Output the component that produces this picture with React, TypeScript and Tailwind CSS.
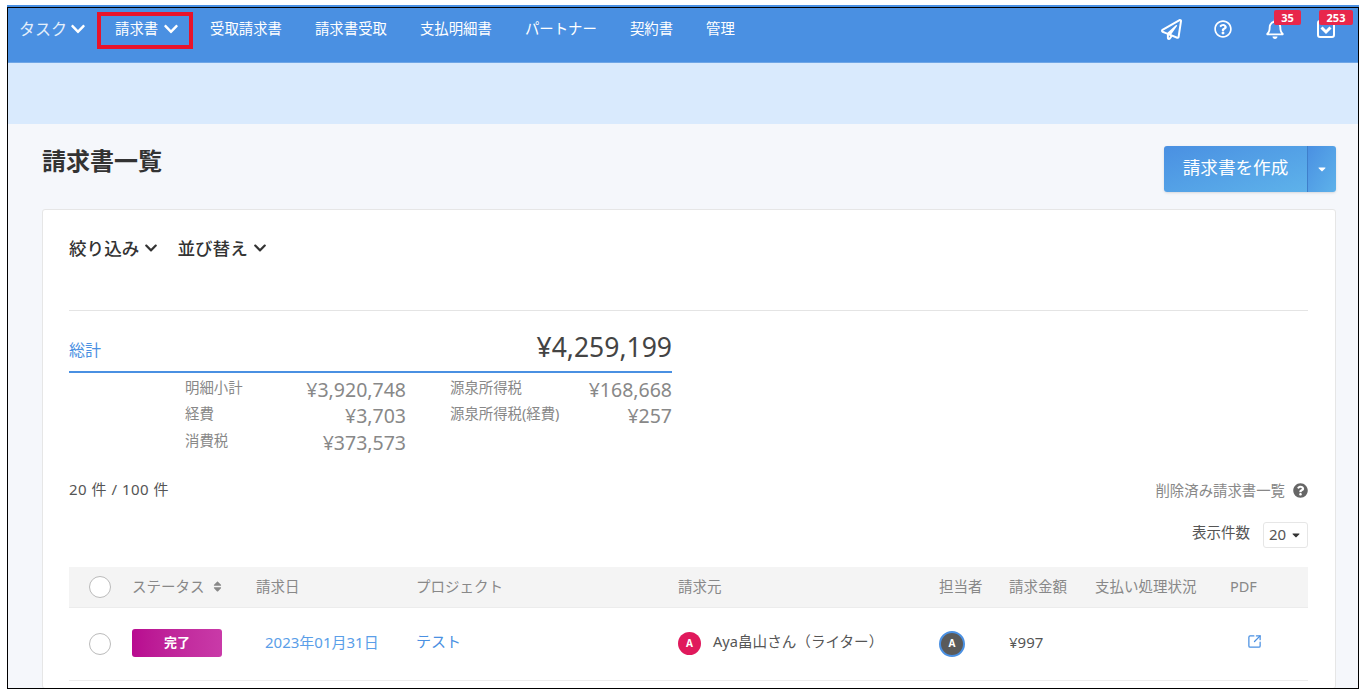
import React from "react";
import { FaChevronDown, FaRegPaperPlane, FaRegQuestionCircle, FaRegBell, FaCaretDown, FaSort, FaQuestionCircle } from "react-icons/fa";
import { SquareArrowOutUpRight } from "lucide-react";

const font = { fontFamily: '"Noto Sans", "Noto Sans CJK JP", sans-serif' };
const navItems = ["受取請求書", "請求書受取", "支払明細書", "パートナー", "契約書", "管理"];

const App: React.FC = () => {
  return (
    <div className="w-[1368px] h-[699px] bg-white overflow-hidden pt-[5px] pl-[7px]" style={font}>
      <div className="w-[1352px] h-[2px] bg-[#4a90e2]" />
      <div className="w-[1352px] h-[682px] border border-black bg-[#f5f7fb] overflow-hidden">
        <header className="h-[55px] bg-[#4a90e2] border-b border-[#6fa6e6] flex text-white text-[14.4px] relative">
          <div className="flex items-center h-[42px] pl-[11px] gap-[3px] w-[86px] text-[16px] text-[#e4effb]">
            <span>タスク</span>
            <FaChevronDown className="text-[16px] text-white" />
          </div>
          <div className="relative flex items-center h-[42px] ml-[3px] w-[96px] pl-[18px] gap-[5px]">
            <span>請求書</span>
            <FaChevronDown className="text-[16px]" />
            <div className="absolute left-0 top-[4px] w-[96px] h-[37px] border-4 border-[#e8132b]" />
          </div>
          <div className="flex items-center h-[42px] ml-[17px] gap-[33px]">
            {navItems.map((t) => (
              <span key={t}>{t}</span>
            ))}
          </div>
          <div className="ml-auto flex items-center h-[42px] pr-[23px] relative">
            <FaRegPaperPlane className="text-[21px] mr-[32px]" />
            <FaRegQuestionCircle className="text-[18px] mr-[33px]" />
            <div className="relative mr-[32px]">
              <FaRegBell className="text-[20px]" />
              <span className="absolute left-[9px] top-[-9px] w-[27px] h-[15px] rounded-[2px] bg-[#e8274b] text-[11px] font-bold leading-[15px] text-center">35</span>
            </div>
            <div className="relative">
              <svg width="18" height="18" viewBox="0 0 18 18" fill="none">
                <rect x="1" y="1" width="16" height="16" rx="2" stroke="white" strokeWidth="2" />
                <path d="M4.5 7.5 9 12l4.5-4.5" stroke="white" strokeWidth="3" />
              </svg>
              <span className="absolute left-[2px] top-[-10px] w-[34px] h-[15px] rounded-[2px] bg-[#e8274b] text-[11px] font-bold leading-[15px] text-center">253</span>
            </div>
          </div>
        </header>
        <div className="h-[61px] bg-[#d9eafd]" />
        <main className="pl-[34px] pr-[22px]">
          <div className="flex justify-between h-[85px]">
            <h1 className="text-[24px] font-bold text-[#333] mt-[19px] leading-[34px]" style={{ fontFamily: '"Noto Sans CJK JP", sans-serif' }}>請求書一覧</h1>
            <div className="flex h-[46px] mt-[22px] rounded-[3px] shadow-sm text-white overflow-hidden">
              <div className="w-[143px] bg-gradient-to-br from-[#4a90e2] to-[#5eb2ea] flex items-center justify-center text-[17.6px] pb-[3px]">請求書を作成</div>
              <div className="w-[29px] border-l border-[#3f7fcb] bg-gradient-to-br from-[#4a90e2] to-[#5eb2ea] flex items-center justify-center">
                <FaCaretDown className="text-[12px]" />
              </div>
            </div>
          </div>
          <section className="bg-white border border-[#e6e6e6] rounded-[3px] h-[480px] pl-[26px] pr-[27px]">
            <div className="h-[101px] border-b border-[#e4e4e4] flex items-start gap-[19px] pt-[25px] text-[17.6px] font-medium text-[#333]">
              <span className="flex items-center gap-[5px]">絞り込み <FaChevronDown className="text-[14px]" /></span>
              <span className="flex items-center gap-[5px]">並び替え <FaChevronDown className="text-[14px]" /></span>
            </div>
            <div className="w-[603px] mt-[19px] h-[43px] border-b-2 border-[#4a90e2] flex justify-between items-center pb-[6px]">
              <span className="text-[16px] text-[#4a90e2] mt-[4px]">総計</span>
              <span className="text-[26.5px] text-[#444]">¥4,259,199</span>
            </div>
            <div className="w-[603px] pl-[116px] pt-[3px] grid grid-cols-[221px_1fr] text-[#888]">
              <div className="grid grid-cols-[1fr_auto] auto-rows-[26.5px] items-center">
                <span className="text-[14.4px] mb-[3px]">明細小計</span><span className="text-[19.5px] text-right">¥3,920,748</span>
                <span className="text-[14.4px] mb-[3px]">経費</span><span className="text-[19.5px] text-right">¥3,703</span>
                <span className="text-[14.4px] mb-[3px]">消費税</span><span className="text-[19.5px] text-right">¥373,573</span>
              </div>
              <div className="pl-[44px] grid grid-cols-[1fr_auto] auto-rows-[26.5px] items-center">
                <span className="text-[14.4px] mb-[3px]">源泉所得税</span><span className="text-[19.5px] text-right">¥168,668</span>
                <span className="text-[14.4px] mb-[3px]">源泉所得税(経費)</span><span className="text-[19.5px] text-right">¥257</span>
              </div>
            </div>
            <div className="flex justify-between items-start mt-[22px] h-[21px]">
              <span className="text-[15px] tracking-[0.5px] text-[#555]">20 件 / 100 件</span>
              <span className="flex items-center gap-[8px] text-[14.4px] text-[#888] mt-[2px]">削除済み請求書一覧 <FaQuestionCircle className="text-[15px] text-[#666]" /></span>
            </div>
            <div className="flex justify-end items-center gap-[13px] mt-[23px] h-[26px]">
              <span className="text-[14.5px] text-[#555] mb-[4px]">表示件数</span>
              <span className="w-[45px] h-[26px] border border-[#e6e6e6] rounded-[3px] flex items-center justify-center gap-[4px] text-[15px] text-[#555]">20 <FaCaretDown className="text-[12px] text-[#333]" /></span>
            </div>
            <div className="flex items-center h-[41px] mt-[19px] bg-[#f4f4f4] border-b border-[#ececec] text-[14.5px] text-[#888]">
              <span className="w-[22px] h-[22px] ml-[20px] rounded-full border border-[#bbb] bg-white" />
              <span className="ml-[21px] w-[124px] flex items-center gap-[6px]">ステータス <FaSort className="text-[13px]" /></span>
              <span className="w-[160px]">請求日</span>
              <span className="w-[262px]">プロジェクト</span>
              <span className="w-[261px]">請求元</span>
              <span className="w-[70px]">担当者</span>
              <span className="w-[86px]">請求金額</span>
              <span className="w-[135px]">支払い処理状況</span>
              <span>PDF</span>
            </div>
            <div className="flex items-center h-[73px] border-b border-[#ececec] text-[14px]">
              <span className="w-[22px] h-[22px] ml-[20px] rounded-full border border-[#bbb] bg-white" />
              <span className="ml-[21px] w-[133px] mb-[2px]">
                <span className="w-[90px] h-[28px] rounded-[3px] bg-gradient-to-r from-[#b80a90] to-[#c93aa8] text-white text-[13px] font-bold flex items-center justify-center">完了</span>
              </span>
              <span className="w-[151px] text-[#5a9ee8] text-[15px] mb-[3px]">2023年01月31日</span>
              <span className="w-[262px] text-[#4a90e2] text-[15px] mb-[4px]">テスト</span>
              <span className="w-[261px] flex items-center gap-[12px] text-[#555] text-[14.6px]">
                <span className="w-[23px] h-[23px] rounded-full bg-[#e0195c] text-white text-[10px] font-bold flex items-center justify-center">A</span>
                <span className="mb-[3px]">Aya畠山さん（ライター）</span>
              </span>
              <span className="w-[70px]">
                <span className="w-[26px] h-[26px] rounded-full bg-[#5a5a5a] border-2 border-[#4a90e2] text-white text-[10px] font-bold flex items-center justify-center">A</span>
              </span>
              <span className="w-[86px] text-[#555] text-[15px] mb-[2px]">¥997</span>
              <span className="w-[135px]" />
              <span className="ml-[17px] mb-[4px] text-[#4a90e2]"><SquareArrowOutUpRight size={15} /></span>
            </div>
          </section>
        </main>
      </div>
    </div>
  );
};

export default App;
